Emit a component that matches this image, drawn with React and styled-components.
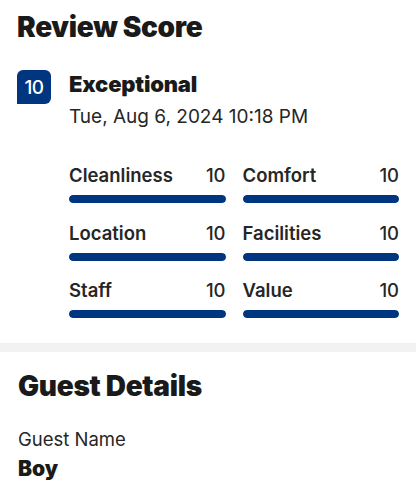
import React from "react";
import styled, { createGlobalStyle } from "styled-components";

const Global = createGlobalStyle`
  html, body { margin: 0; padding: 0; background: #fff; }
  body { font-family: Inter, "Noto Sans", sans-serif; color: #1a1a1a; -webkit-font-smoothing: antialiased; }
  * { box-sizing: border-box; }
`;

const Page = styled.div`
  width: 416px;
  display: flex;
  flex-direction: column;
`;

const Section = styled.section`
  padding: ${(p) => p.$pad || "0 17px"};
  display: flex;
  flex-direction: column;
`;

const Title = styled.h2`
  margin: 0;
  font-size: 28px;
  line-height: 32px;
  font-weight: 900;
  letter-spacing: -0.3px;
  color: #1a1a1a;
`;

const ScoreRow = styled.div`
  margin-top: 27px;
  display: flex;
  gap: 18px;
  align-items: flex-start;
`;

const Badge = styled.div`
  width: 34px;
  height: 34px;
  flex: none;
  background: #003580;
  color: #fff;
  border-radius: 6px 6px 6px 0;
  display: flex;
  align-items: center;
  justify-content: center;
  font-size: 19px;
  font-weight: 500;
  letter-spacing: -0.5px;
`;

const ScoreBody = styled.div`
  flex: 1;
  display: flex;
  flex-direction: column;
`;

const Verdict = styled.div`
  font-size: 22px;
  line-height: 28px;
  font-weight: 900;
  letter-spacing: -0.2px;
`;

const DateText = styled.div`
  margin-top: 7px;
  font-size: 19px;
  line-height: 24px;
  font-weight: 400;
  color: #262626;
`;

const Grid = styled.div`
  margin-top: 34px;
  display: grid;
  grid-template-columns: 1fr 1fr;
  column-gap: 17px;
  row-gap: 17.5px;
`;

const Item = styled.div`
  display: flex;
  flex-direction: column;
  gap: 8px;
`;

const ItemHead = styled.div`
  display: flex;
  justify-content: space-between;
  font-size: 18.5px;
  line-height: 24px;
  font-weight: 600;
  color: #262626;
`;

const ItemValue = styled.span`
  font-weight: 500;
`;

const Bar = styled.div`
  height: 8px;
  border-radius: 4px;
  background: #e6e6e6;
  overflow: hidden;
`;

const Fill = styled.div`
  height: 100%;
  background: #003580;
  border-radius: 4px;
`;

const Divider = styled.div`
  height: 9px;
  background: #f2f2f2;
  margin-top: 25px;
`;

const Label = styled.div`
  margin-top: 26px;
  font-size: 18.5px;
  line-height: 22px;
  font-weight: 400;
  color: #262626;
`;

const Value = styled.div`
  font-size: 21px;
  line-height: 26px;
  font-weight: 900;
  margin-top: 6px;
`;

const categories = [
  ["Cleanliness", 10],
  ["Comfort", 10],
  ["Location", 10],
  ["Facilities", 10],
  ["Staff", 10],
  ["Value", 10],
];

export default function App() {
  return (
    <Page>
      <Global />
      <Section $pad="11px 17px 0">
        <Title>Review Score</Title>
        <ScoreRow>
          <Badge>10</Badge>
          <ScoreBody>
            <Verdict>Exceptional</Verdict>
            <DateText>Tue, Aug 6, 2024 10:18 PM</DateText>
            <Grid>
              {categories.map(([name, v]) => (
                <Item key={name}>
                  <ItemHead>
                    <span>{name}</span>
                    <ItemValue>{v}</ItemValue>
                  </ItemHead>
                  <Bar>
                    <Fill style={{ width: `${v * 10}%` }} />
                  </Bar>
                </Item>
              ))}
            </Grid>
          </ScoreBody>
        </ScoreRow>
      </Section>
      <Divider />
      <Section $pad="18px 18px 0">
        <Title>Guest Details</Title>
        <Label>Guest Name</Label>
        <Value>Boy</Value>
      </Section>
    </Page>
  );
}
